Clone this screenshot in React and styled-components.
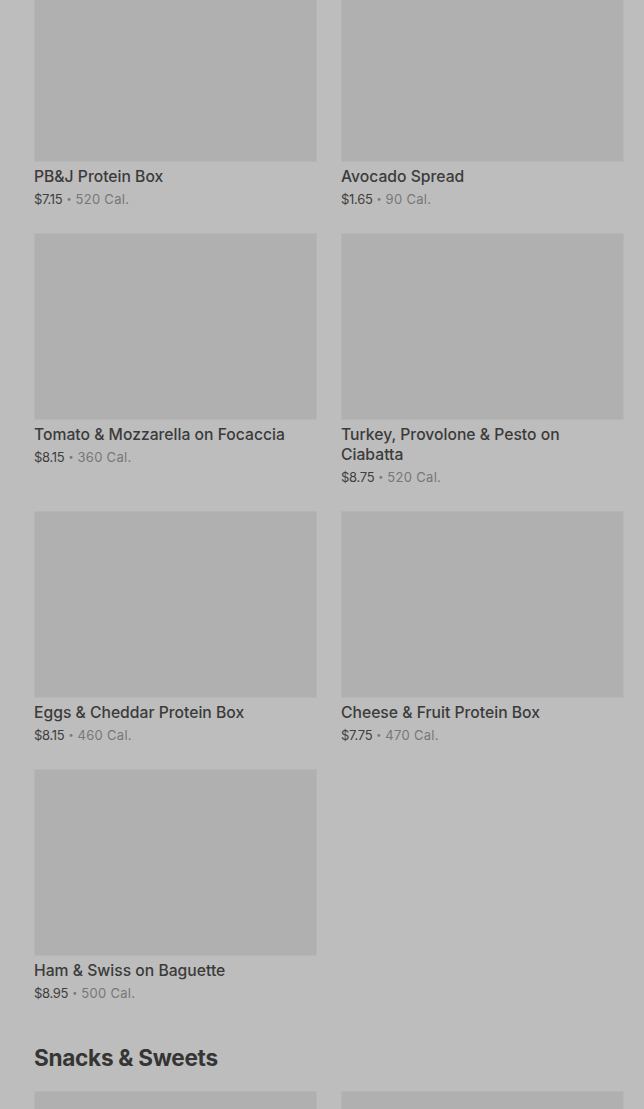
import styled, { createGlobalStyle } from "styled-components";

const GlobalStyle = createGlobalStyle`
  html, body {
    margin: 0;
    padding: 0;
    background: #bdbdbd;
    overflow: hidden;
  }
  body {
    font-family: Inter, "Noto Sans", sans-serif;
    color: #3b3b3b;
  }
`;

const items = [
  { name: "PB&J Protein Box", price: "$7.15", cal: "520 Cal." },
  { name: "Avocado Spread", price: "$1.65", cal: "90 Cal." },
  { name: "Tomato & Mozzarella on Focaccia", price: "$8.15", cal: "360 Cal." },
  { name: "Turkey, Provolone & Pesto on Ciabatta", price: "$8.75", cal: "520 Cal." },
  { name: "Eggs & Cheddar Protein Box", price: "$8.15", cal: "460 Cal." },
  { name: "Cheese & Fruit Protein Box", price: "$7.75", cal: "470 Cal." },
  { name: "Ham & Swiss on Baguette", price: "$8.95", cal: "500 Cal." },
];

function Card({ item }) {
  return (
    <CardBox>
      <Thumb />
      <Name>{item.name}</Name>
      <Meta>
        <Price>{item.price}</Price>
        <Dot>•</Dot>
        <Cal>{item.cal}</Cal>
      </Meta>
    </CardBox>
  );
}

export default function App() {
  return (
    <Page>
      <GlobalStyle />
      <Grid $shift>
        {items.map((it) => (
          <Card key={it.name} item={it} />
        ))}
      </Grid>
      <Section>
        <Heading>Snacks &amp; Sweets</Heading>
        <Grid>
          <Thumb />
          <Thumb />
        </Grid>
      </Section>
    </Page>
  );
}

const Page = styled.div`
  padding: 0 20px 0 34px;
  height: 1109px;
  overflow: hidden;
`;

const Grid = styled.div`
  display: grid;
  grid-template-columns: 283px 283px;
  column-gap: 24px;
  row-gap: 25px;
  align-items: start;
  margin-top: ${(p) => (p.$shift ? "-25px" : "0")};
`;

const CardBox = styled.div`
  display: flex;
  flex-direction: column;
`;

const Thumb = styled.div`
  height: 187px;
  background: #b0b0b0;
  border: 1px solid #b6b6b6;
  box-sizing: border-box;
`;

const Name = styled.div`
  margin-top: 5px;
  font-size: 15.7px;
  line-height: 20px;
  font-weight: 500;
  color: #3b3b3b;
`;

const Meta = styled.div`
  margin-top: 3px;
  font-size: 13px;
  line-height: 18px;
  display: flex;
  align-items: center;
  gap: 4px;
`;

const Price = styled.span`
  color: #3f3f3f;
  letter-spacing: -0.3px;
`;

const Dot = styled.span`
  color: #7a7a7a;
  font-size: 9px;
`;

const Cal = styled.span`
  color: #777;
  letter-spacing: 0.3px;
`;

const Section = styled.section`
  margin-top: 40px;
`;

const Heading = styled.h2`
  margin: 0 0 17px;
  font-size: 22.6px;
  line-height: 32px;
  font-weight: 700;
  letter-spacing: -0.3px;
  color: #353535;
`;
